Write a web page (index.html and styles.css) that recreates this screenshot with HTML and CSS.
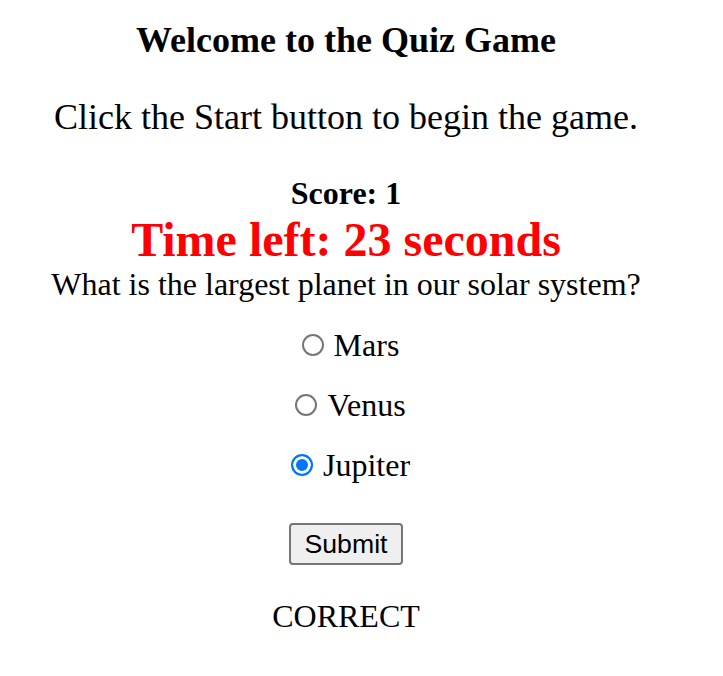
FILE: index.html
```html
<!DOCTYPE html>
<html lang="en">
<head>
<meta charset="utf-8">
<title>Quiz Game</title>
<link rel="stylesheet" href="styles.css">
</head>
<body>
<main class="page">
  <h1 class="title">Welcome to the Quiz Game</h1>
  <p class="intro">Click the Start button to begin the game.</p>
  <div class="score">Score: 1</div>
  <div class="timer">Time left: 23 seconds</div>
  <div class="question">What is the largest planet in our solar system?</div>
  <form class="options">
    <div class="option"><input class="radio" type="radio" name="answer" id="a1" value="Mars"><label for="a1">Mars</label></div>
    <div class="option"><input class="radio" type="radio" name="answer" id="a2" value="Venus"><label for="a2">Venus</label></div>
    <div class="option"><input class="radio" type="radio" name="answer" id="a3" value="Jupiter" checked><label for="a3">Jupiter</label></div>
  </form>
  <div class="actions"><button class="submit" type="button">Submit</button></div>
  <div class="result">CORRECT</div>
</main>
</body>
</html>
```
FILE: styles.css
```css
html, body {
  margin: 0;
  padding: 0;
  background: #ffffff;
}

body {
  font-family: "Liberation Serif", "Times New Roman", serif;
  color: #000000;
}

.page {
  width: 660px;
  padding: 20px 16px 0 16px;
  text-align: center;
}

.title {
  margin: 0;
  font-size: 36px;
  line-height: 40px;
  font-weight: bold;
}

.intro {
  margin: 37px 0 0 0;
  font-size: 36px;
  line-height: 40px;
}

.score {
  margin-top: 38px;
  font-size: 32px;
  line-height: 36px;
  font-weight: bold;
}

.timer {
  margin-top: 3px;
  font-size: 48px;
  line-height: 52px;
  font-weight: bold;
  color: #ff0000;
}

.question {
  margin-top: 0;
  font-size: 32px;
  line-height: 36px;
}

.options {
  margin: 25px 0 0 0;
  display: flex;
  flex-direction: column;
  gap: 24px;
}

.option {
  display: flex;
  justify-content: center;
  align-items: center;
  gap: 10px;
  padding-left: 9px;
  font-size: 32px;
  line-height: 36px;
}

.radio {
  appearance: none;
  -webkit-appearance: none;
  box-sizing: border-box;
  width: 22px;
  height: 22px;
  margin: 0;
  border: 2px solid #767676;
  border-radius: 50%;
  background: #ffffff;
}

.radio:checked {
  border-color: #0075ff;
  background: #0075ff;
  box-shadow: inset 0 0 0 3px #ffffff;
}

.actions {
  margin-top: 40px;
  display: flex;
  justify-content: center;
}

.submit {
  font-family: "Liberation Sans", Arial, sans-serif;
  font-size: 26.67px;
  line-height: 30px;
  padding: 4px 14px;
  border: 2px solid #767676;
  border-radius: 4px;
  background: #efefef;
  color: #000000;
}

.result {
  margin-top: 33px;
  font-size: 32px;
  line-height: 36px;
}
```
